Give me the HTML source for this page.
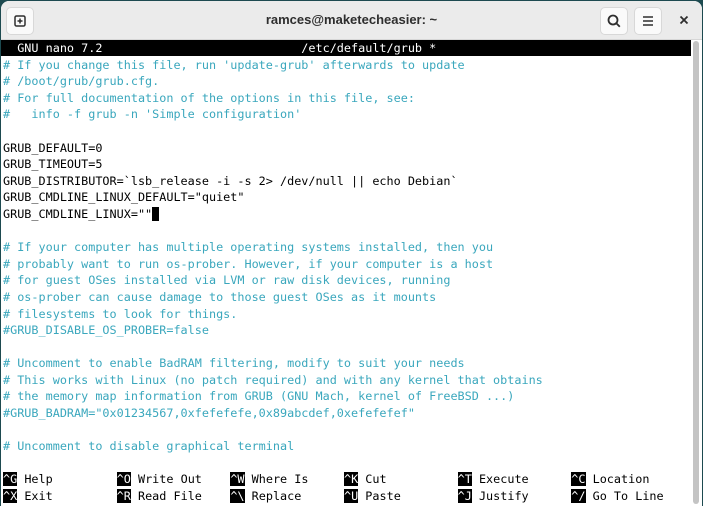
<!DOCTYPE html>
<html><head><style>
body{margin:0;width:703px;height:506px;background:#1d4a50;overflow:hidden;font-family:"Liberation Sans",sans-serif}
.win{position:absolute;left:1px;top:1px;width:701px;height:505px;background:#fff;border-radius:8px 8px 0 0;overflow:hidden}
.tb{position:absolute;left:0;top:0;width:701px;height:38px;background:#ebebeb;border-bottom:1px solid #d6d6d6}
.btn{position:absolute;top:6px;width:26px;height:26px;background:#fafafa;border:1px solid #d8d8d8;border-radius:5px}
.title{position:absolute;left:0;width:701px;top:11px;text-align:center;font-size:13px;font-weight:bold;color:#2e2e2e}
.term{position:absolute;left:2px;top:39px;font-family:"DejaVu Sans Mono",monospace;font-size:11.8px;line-height:16.6px;white-space:pre;color:#000}
.hdr{position:absolute;left:0;top:39px;width:690px;height:16px;background:#000}
.c{color:#3aa7bd}
.k{background:#000;color:#fff}
.sb{position:absolute;left:692px;top:40px;width:6px;height:463px;background:#c4c4c4;border-radius:3px}
</style></head><body><div class="win">
<div class="tb">
<div class="btn" style="left:5px"><svg width="26" height="26" viewBox="0 0 26 26"><rect x="8" y="8" width="10" height="10" rx="1.5" fill="none" stroke="#2e2e2e" stroke-width="1.5"/><path d="M13 10.5v5M10.5 13h5" stroke="#2e2e2e" stroke-width="1.5"/></svg></div>
<div class="title">ramces@maketecheasier: ~</div>
<div class="btn" style="left:599px"><svg width="26" height="26" viewBox="0 0 26 26"><circle cx="12" cy="12" r="4.5" fill="none" stroke="#2e2e2e" stroke-width="1.8"/><path d="M15.3 15.3l3.5 3.5" stroke="#2e2e2e" stroke-width="1.8"/></svg></div>
<div class="btn" style="left:633px"><svg width="26" height="26" viewBox="0 0 26 26"><path d="M8 9h10M8 13h10M8 17h10" stroke="#2e2e2e" stroke-width="1.5"/></svg></div>
<svg style="position:absolute;left:678px;top:14px" width="10" height="10"><path d="M1.5 1.5l7 7M8.5 1.5l-7 7" stroke="#2e2e2e" stroke-width="1.8"/></svg>
</div>
<div class="hdr"></div>
<div class="sb"></div>
<div class="term"><span style="color:#fff">  GNU nano 7.2                            /etc/default/grub *</span>
<span class="c"># If you change this file, run 'update-grub' afterwards to update
# /boot/grub/grub.cfg.
# For full documentation of the options in this file, see:
#   info -f grub -n 'Simple configuration'</span>

GRUB_DEFAULT=0
GRUB_TIMEOUT=5
GRUB_DISTRIBUTOR=`lsb_release -i -s 2&gt; /dev/null || echo Debian`
GRUB_CMDLINE_LINUX_DEFAULT="quiet"
GRUB_CMDLINE_LINUX=""<span class="k"> </span>

<span class="c"># If your computer has multiple operating systems installed, then you
# probably want to run os-prober. However, if your computer is a host
# for guest OSes installed via LVM or raw disk devices, running
# os-prober can cause damage to those guest OSes as it mounts
# filesystems to look for things.
#GRUB_DISABLE_OS_PROBER=false

# Uncomment to enable BadRAM filtering, modify to suit your needs
# This works with Linux (no patch required) and with any kernel that obtains
# the memory map information from GRUB (GNU Mach, kernel of FreeBSD ...)
#GRUB_BADRAM="0x01234567,0xfefefefe,0x89abcdef,0xefefefef"

# Uncomment to disable graphical terminal</span>

<span class="k">^G</span> Help         <span class="k">^O</span> Write Out    <span class="k">^W</span> Where Is     <span class="k">^K</span> Cut          <span class="k">^T</span> Execute      <span class="k">^C</span> Location
<span class="k">^X</span> Exit         <span class="k">^R</span> Read File    <span class="k">^\</span> Replace      <span class="k">^U</span> Paste        <span class="k">^J</span> Justify      <span class="k">^/</span> Go To Line</div>
</div></body></html>
